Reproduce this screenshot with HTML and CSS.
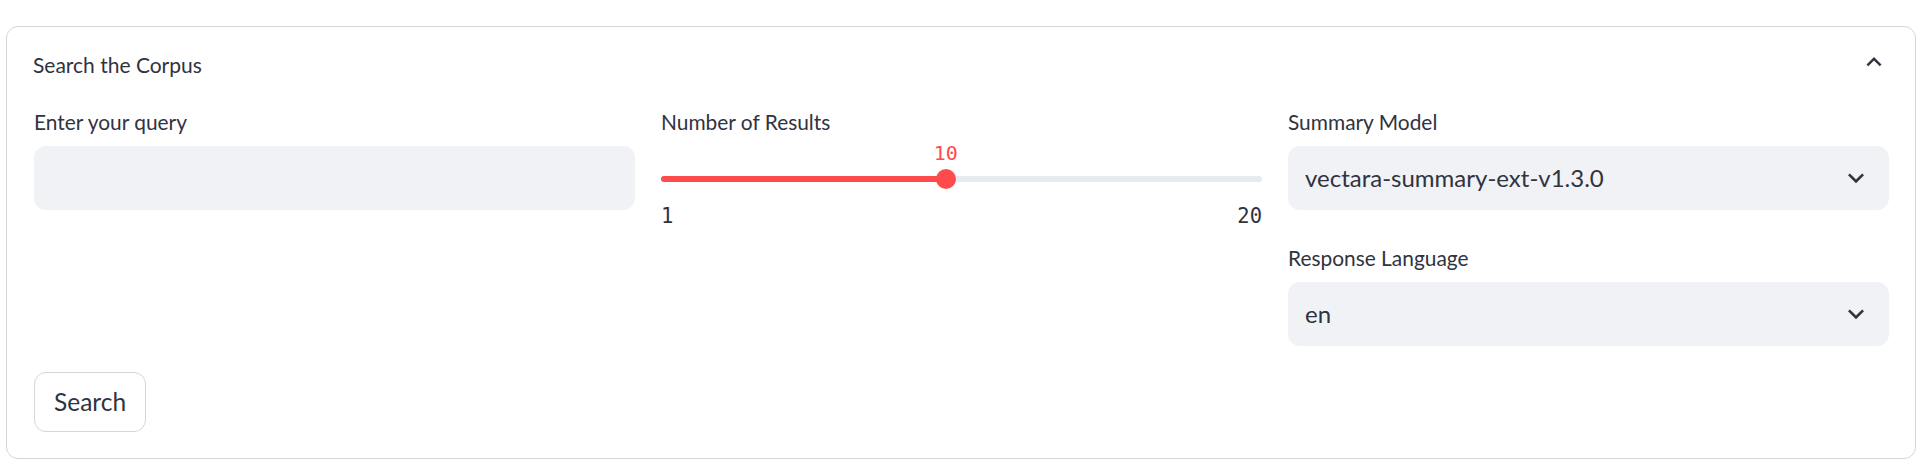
FILE: index.html
```html
<!DOCTYPE html>
<html lang="en">
<head>
<meta charset="utf-8">
<title>Search the Corpus</title>
<link rel="stylesheet" href="styles.css">
</head>
<body>
<div class="expander">
  <div class="summary">
    <span class="summary-title">Search the Corpus</span>
    <svg class="summary-icon" viewBox="0 0 24 24" width="30" height="30" aria-hidden="true"><path d="M7.41 15.41L12 10.83l4.59 4.58L18 14l-6-6-6 6z"/></svg>
  </div>
  <div class="body">
    <div class="columns">
      <div class="column">
        <div class="widget">
          <label class="label">Enter your query</label>
          <div class="input"></div>
        </div>
      </div>
      <div class="column">
        <div class="widget">
          <label class="label">Number of Results</label>
          <div class="slider">
            <div class="track">
              <div class="fill" style="width:47.368%"></div>
              <div class="thumb" style="left:47.368%"></div>
              <div class="thumb-value" style="left:47.368%">10</div>
            </div>
            <div class="ticks"><span>1</span><span>20</span></div>
          </div>
        </div>
      </div>
      <div class="column">
        <div class="widget">
          <label class="label">Summary Model</label>
          <div class="select">
            <span class="select-value">vectara-summary-ext-v1.3.0</span>
            <svg class="select-icon" viewBox="0 0 24 24" width="32" height="32" aria-hidden="true"><path d="M16.59 8.59L12 13.17 7.41 8.59 6 10l6 6 6-6z"/></svg>
          </div>
        </div>
        <div class="widget">
          <label class="label">Response Language</label>
          <div class="select">
            <span class="select-value">en</span>
            <svg class="select-icon" viewBox="0 0 24 24" width="32" height="32" aria-hidden="true"><path d="M16.59 8.59L12 13.17 7.41 8.59 6 10l6 6 6-6z"/></svg>
          </div>
        </div>
      </div>
    </div>
    <div class="actions">
      <button class="button" type="button">Search</button>
    </div>
  </div>
</div>
</body>
</html>
```
FILE: styles.css
```css
html, body {
  margin: 0;
  padding: 0;
  background: #ffffff;
}

body {
  font-family: "Source Sans Pro", Lato, sans-serif;
  color: #31333f;
}

.expander {
  margin: 26px 4px 0 6px;
  border: 1px solid #d6d6d9;
  border-radius: 12px;
  box-sizing: border-box;
}

.summary {
  height: 73px;
  display: flex;
  align-items: center;
  justify-content: space-between;
  padding: 0 26px 0 26px;
}

.summary-title {
  font-size: 21px;
  line-height: 26px;
  margin-top: 3px;
}

.summary-icon {
  display: block;
  fill: #31333f;
  margin-bottom: 3px;
}

.body {
  padding: 0 26px 26px 27px;
}

.columns {
  display: grid;
  grid-template-columns: repeat(3, 1fr);
  column-gap: 26px;
}

.column {
  display: flex;
  flex-direction: column;
  gap: 26px;
  min-width: 0;
}

.widget {
  display: flex;
  flex-direction: column;
}

.label {
  display: block;
  padding-top: 9px;
  font-size: 20.9px;
  line-height: 26px;
  margin-bottom: 11px;
}

.input {
  height: 64px;
  background: #f0f2f6;
  border-radius: 12px;
}

.slider {
  height: 64px;
}

.track {
  position: relative;
  margin-top: 30px;
  height: 6px;
  border-radius: 3px;
  background: #e6eaf1;
}

.fill {
  height: 6px;
  border-radius: 3px 0 0 3px;
  background: #ff4b4b;
}

.thumb {
  position: absolute;
  top: -7px;
  width: 20px;
  height: 20px;
  margin-left: -10px;
  border-radius: 50%;
  background: #ff4b4b;
}

.thumb-value {
  position: absolute;
  top: -35px;
  transform: translateX(-50%);
  font-family: "DejaVu Sans Mono", monospace;
  font-size: 20px;
  line-height: 24px;
  color: #ff4b4b;
  white-space: nowrap;
}

.ticks {
  display: flex;
  justify-content: space-between;
  margin-top: 22px;
  font-family: "DejaVu Sans Mono", monospace;
  font-size: 20.5px;
  line-height: 24px;
  color: #31333f;
}

.select {
  height: 64px;
  background: #f0f2f6;
  border-radius: 12px;
  display: flex;
  align-items: center;
  justify-content: space-between;
  padding: 0 17px 0 17px;
  box-sizing: border-box;
}

.select-value {
  font-size: 24px;
  line-height: 30px;
  white-space: nowrap;
}

.select-icon {
  display: block;
  fill: #31333f;
}

.actions {
  margin-top: 26px;
  display: flex;
}

.button {
  height: 60px;
  padding: 0 19px;
  border: 1px solid #d6d6d9;
  border-radius: 12px;
  background: #ffffff;
  color: #31333f;
  font-family: "Source Sans Pro", Lato, sans-serif;
  font-size: 24.5px;
  line-height: 30px;
  cursor: pointer;
}
```
